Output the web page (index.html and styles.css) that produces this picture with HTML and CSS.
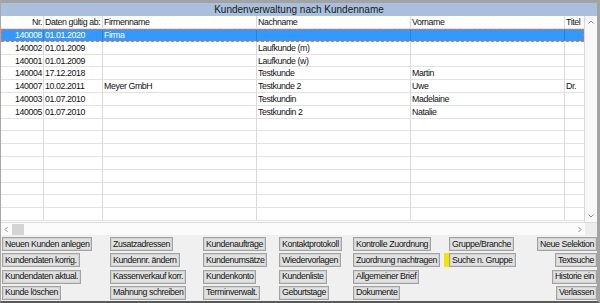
FILE: index.html
```html
<!DOCTYPE html>
<html lang="de">
<head>
  <meta charset="UTF-8">
  <title>Kundenverwaltung nach Kundenname</title>
  <link rel="stylesheet" href="styles.css">
</head>
<body>
  <div class="window">
    <div class="title">Kundenverwaltung nach Kundenname</div>

    <div class="grid-area">
      <div class="grid">
        <div class="row head">
          <div class="cell num">Nr.</div>
          <div class="cell">Daten gültig ab:</div>
          <div class="cell">Firmenname</div>
          <div class="cell">Nachname</div>
          <div class="cell">Vorname</div>
          <div class="cell">Titel</div>
        </div>
        <div class="row selected">
          <div class="cell num">140008</div>
          <div class="cell">01.01.2020</div>
          <div class="cell">Firma</div>
          <div class="cell"></div>
          <div class="cell"></div>
          <div class="cell"></div>
        </div>
        <div class="row">
          <div class="cell num">140002</div>
          <div class="cell">01.01.2009</div>
          <div class="cell"></div>
          <div class="cell">Laufkunde (m)</div>
          <div class="cell"></div>
          <div class="cell"></div>
        </div>
        <div class="row">
          <div class="cell num">140001</div>
          <div class="cell">01.01.2009</div>
          <div class="cell"></div>
          <div class="cell">Laufkunde (w)</div>
          <div class="cell"></div>
          <div class="cell"></div>
        </div>
        <div class="row">
          <div class="cell num">140004</div>
          <div class="cell">17.12.2018</div>
          <div class="cell"></div>
          <div class="cell">Testkunde</div>
          <div class="cell">Martin</div>
          <div class="cell"></div>
        </div>
        <div class="row">
          <div class="cell num">140007</div>
          <div class="cell">10.02.2011</div>
          <div class="cell">Meyer GmbH</div>
          <div class="cell">Testkunde 2</div>
          <div class="cell">Uwe</div>
          <div class="cell">Dr.</div>
        </div>
        <div class="row">
          <div class="cell num">140003</div>
          <div class="cell">01.07.2010</div>
          <div class="cell"></div>
          <div class="cell">Testkundin</div>
          <div class="cell">Madelaine</div>
          <div class="cell"></div>
        </div>
        <div class="row">
          <div class="cell num">140005</div>
          <div class="cell">01.07.2010</div>
          <div class="cell"></div>
          <div class="cell">Testkundin 2</div>
          <div class="cell">Natalie</div>
          <div class="cell"></div>
        </div>
        <div class="row empty"><div class="cell"></div><div class="cell"></div><div class="cell"></div><div class="cell"></div><div class="cell"></div><div class="cell"></div></div>
        <div class="row empty"><div class="cell"></div><div class="cell"></div><div class="cell"></div><div class="cell"></div><div class="cell"></div><div class="cell"></div></div>
        <div class="row empty"><div class="cell"></div><div class="cell"></div><div class="cell"></div><div class="cell"></div><div class="cell"></div><div class="cell"></div></div>
        <div class="row empty"><div class="cell"></div><div class="cell"></div><div class="cell"></div><div class="cell"></div><div class="cell"></div><div class="cell"></div></div>
        <div class="row empty"><div class="cell"></div><div class="cell"></div><div class="cell"></div><div class="cell"></div><div class="cell"></div><div class="cell"></div></div>
        <div class="row empty"><div class="cell"></div><div class="cell"></div><div class="cell"></div><div class="cell"></div><div class="cell"></div><div class="cell"></div></div>
        <div class="row empty"><div class="cell"></div><div class="cell"></div><div class="cell"></div><div class="cell"></div><div class="cell"></div><div class="cell"></div></div>
        <div class="row empty"><div class="cell"></div><div class="cell"></div><div class="cell"></div><div class="cell"></div><div class="cell"></div><div class="cell"></div></div>
      </div>

      <div class="vscroll">
        <svg class="arrow" width="12" height="12" viewBox="0 0 12 12"><path d="M3.5 7.5 L6 5 L8.5 7.5" fill="none" stroke="#8a8a8a" stroke-width="1"/></svg>
        <svg class="arrow" width="12" height="12" viewBox="0 0 12 12"><path d="M3.5 4.5 L6 7 L8.5 4.5" fill="none" stroke="#8a8a8a" stroke-width="1"/></svg>
      </div>
    </div>

    <div class="hscroll-row">
      <div class="hscroll">
        <svg class="arrow" width="11" height="11" viewBox="0 0 11 11"><path d="M6.5 3 L4 5.5 L6.5 8" fill="none" stroke="#8a8a8a" stroke-width="1"/></svg>
        <div class="thumb"></div>
        <div class="track"></div>
        <svg class="arrow" width="11" height="11" viewBox="0 0 11 11"><path d="M4.5 3 L7 5.5 L4.5 8" fill="none" stroke="#8a8a8a" stroke-width="1"/></svg>
      </div>
      <div class="corner"></div>
    </div>

    <div class="buttons">
      <button class="btn c1 r1">Neuen Kunden anlegen</button>
      <button class="btn c2 r1">Zusatzadressen</button>
      <button class="btn c3 r1">Kundenaufträge</button>
      <button class="btn c4 r1">Kontaktprotokoll</button>
      <button class="btn c5 r1">Kontrolle Zuordnung</button>
      <button class="btn c6 r1">Gruppe/Branche</button>
      <button class="btn c7 r1">Neue Selektion</button>

      <button class="btn c1 r2">Kundendaten korrig.</button>
      <button class="btn c2 r2">Kundennr. ändern</button>
      <button class="btn c3 r2">Kundenumsätze</button>
      <button class="btn c4 r2">Wiedervorlagen</button>
      <button class="btn c5 r2">Zuordnung nachtragen</button>
      <div class="marker r2"></div>
      <button class="btn c6 r2">Suche n. Gruppe</button>
      <button class="btn c7 r2">Textsuche</button>

      <button class="btn c1 r3">Kundendaten aktual.</button>
      <button class="btn c2 r3">Kassenverkauf korr.</button>
      <button class="btn c3 r3">Kundenkonto</button>
      <button class="btn c4 r3">Kundenliste</button>
      <button class="btn c5 r3">Allgemeiner Brief</button>
      <button class="btn c7 r3">Historie ein</button>

      <button class="btn c1 r4">Kunde löschen</button>
      <button class="btn c2 r4">Mahnung schreiben</button>
      <button class="btn c3 r4">Terminverwalt.</button>
      <button class="btn c4 r4">Geburtstage</button>
      <button class="btn c5 r4">Dokumente</button>
      <button class="btn c7 r4">Verlassen</button>
    </div>
  </div>
</body>
</html>
```

FILE: styles.css
```css
html, body {
  margin: 0;
  padding: 0;
  background: #f0f0f0;
}

.window {
  width: 600px;
  height: 303px;
  box-sizing: border-box;
  border-top: 3px solid #a3a3a3;
  border-left: 1px solid #a8a8a8;
  border-right: 3px solid #a3a3a3;
  border-bottom: 2px solid #5a5a5a;
  font-family: "Liberation Sans", Arial, sans-serif;
  font-size: 8.8px;
  letter-spacing: -0.4px;
  color: #111;
  display: flex;
  flex-direction: column;
  overflow: hidden;
}

.title {
  height: 13px;
  line-height: 13px;
  background: #a9c0dc;
  text-align: center;
  font-size: 10px;
  letter-spacing: 0;
  color: #1a1a1a;
}

.grid-area {
  display: flex;
  height: 206px;
  background: #fff;
}

.grid {
  width: 584px;
  overflow: hidden;
}

.row {
  display: grid;
  grid-template-columns: 43px 59px 154px 154px 154px 20px;
  height: 12.8px;
  box-sizing: border-box;
  border-bottom: 1px solid #e2e2e2;
}

.row.head {
  height: 13px;
}

.cell {
  border-right: 1px solid #d9d9d9;
  padding: 0 1px;
  line-height: 12px;
  white-space: nowrap;
  overflow: hidden;
}

.cell.num {
  text-align: right;
  padding: 0 1px 0 0;
}

.row.selected {
  background: #3399ff;
  color: #fff;
  outline: 1px dashed #f0703c;
  outline-offset: -1px;
}

.row.selected .cell {
  border-right-color: #2f7fd0;
}

.vscroll {
  width: 12px;
  border-left: 1px solid #d9d9d9;
  background: #f8f8f8;
  display: flex;
  flex-direction: column;
  justify-content: space-between;
}

.hscroll-row {
  display: flex;
  height: 12px;
  border-top: 1px solid #dcdcdc;
}

.hscroll {
  width: 584px;
  display: flex;
  align-items: center;
  background: #fbfbfb;
}

.hscroll .arrow {
  flex: none;
}

.hscroll .thumb {
  width: 12px;
  height: 11px;
  background: #d4d4d4;
}

.hscroll .track {
  flex: 1;
}

.corner {
  flex: 1;
  background: #ececec;
}

.buttons {
  flex: 1;
  display: grid;
  grid-template-columns: 108px 93px 76px 74px 91px 5px 88px 1fr;
  grid-template-rows: repeat(4, 14px);
  row-gap: 2.3px;
  padding: 2px 1px 0 1px;
  align-content: start;
}

.btn {
  font: inherit;
  letter-spacing: inherit;
  color: #111;
  background: #e1e1e1;
  border: 1px solid #a2a2a2;
  box-shadow: inset 0 0 0 1px #d2d2d2;
  padding: 0 2px;
  height: 14px;
  line-height: 11px;
  text-align: left;
  justify-self: start;
  white-space: nowrap;
}

.c1 { grid-column: 1; }
.c2 { grid-column: 2; }
.c3 { grid-column: 3; }
.c4 { grid-column: 4; }
.c5 { grid-column: 5; }
.c6 { grid-column: 7; }
.c7 { grid-column: 8; justify-self: end; }

.r1 { grid-row: 1; }
.r2 { grid-row: 2; }
.r3 { grid-row: 3; }
.r4 { grid-row: 4; }

.marker {
  grid-column: 6;
  background: #f2e600;
  width: 5px;
  height: 14px;
}
```
